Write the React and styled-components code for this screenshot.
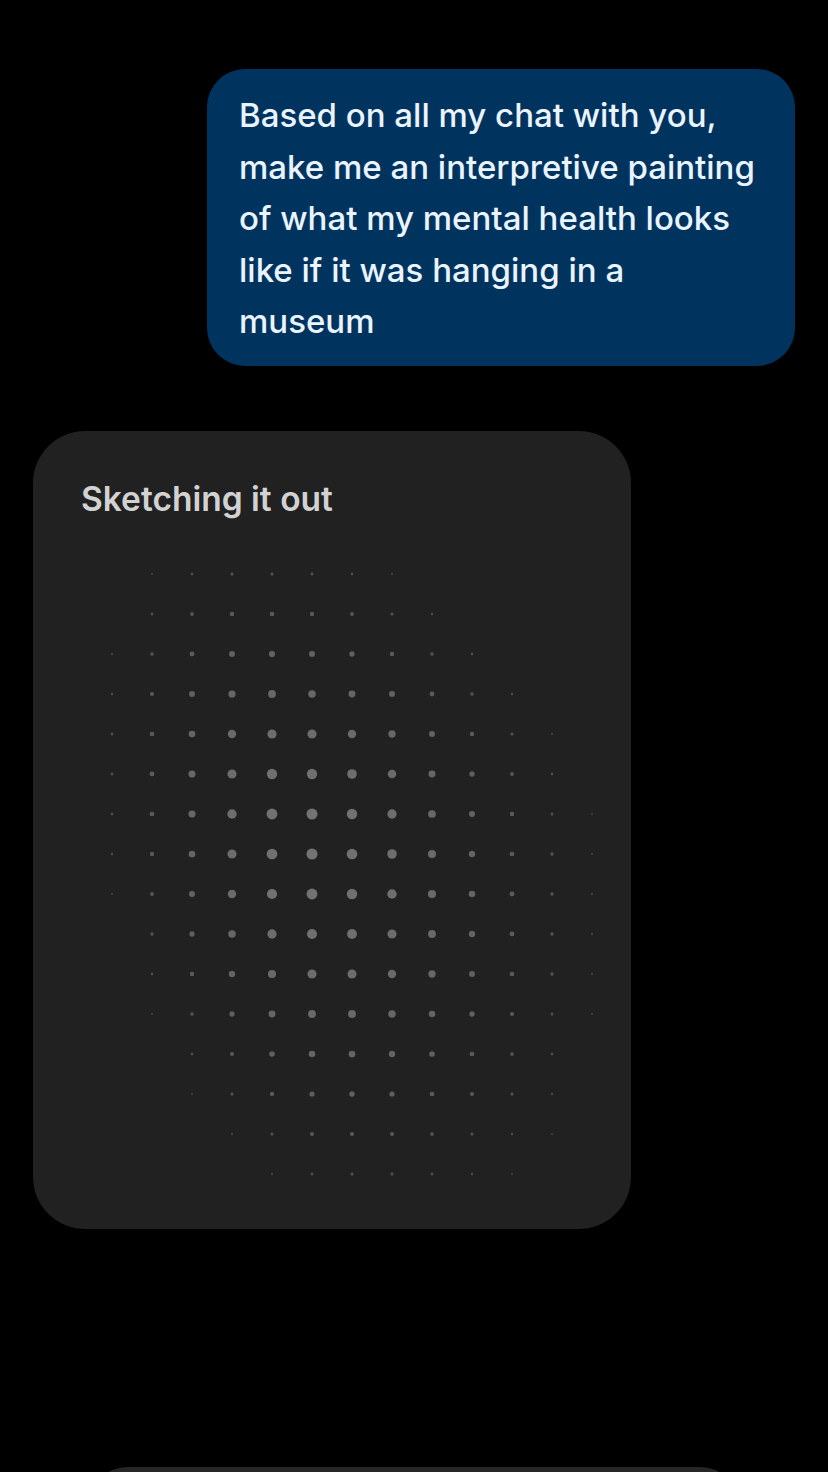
import styled, { createGlobalStyle } from "styled-components"

const GlobalStyle = createGlobalStyle`
  body {
    margin: 0;
    background: #000;
    font-family: Inter, "Noto Sans", sans-serif;
  }
`

const Page = styled.div`
  height: 1472px;
  overflow: hidden;
  background: #000;
  padding-top: 69px;
  box-sizing: border-box;
  display: flex;
  flex-direction: column;
`

const UserRow = styled.div`
  display: flex;
  justify-content: flex-end;
  padding-right: 33px;
`

const Bubble = styled.div`
  width: 588px;
  box-sizing: border-box;
  padding: 21px 32px 18px;
  background: #01335f;
  border-radius: 38px;
  color: #eaf4ff;
  font-size: 33px;
  line-height: 51.5px;
  font-weight: 500;
`

const Card = styled.div`
  margin: 65px 0 0 33px;
  width: 598px;
  box-sizing: border-box;
  padding: 49px 48px 38px;
  background: #212121;
  border-radius: 52px;
  display: flex;
  flex-direction: column;
`

const Title = styled.div`
  color: #d2d2d2;
  font-size: 33.5px;
  line-height: 38px;
  font-weight: 600;
`

const Canvas = styled.svg`
  display: block;
  margin: 33px -48px 0;
  width: 598px;
  height: 640px;
`

const Composer = styled.div`
  margin: 238px auto 0;
  width: 652px;
  height: 80px;
  flex-shrink: 0;
  background: #262626;
  border-radius: 40px 40px 0 0;
`

const lines = [
  "Based on all my chat with you,",
  "make me an interpretive painting",
  "of what my mental health looks",
  "like if it was hanging in a",
  "museum",
]

const CUT = 0.16

// gaussian blob of dots; its centre drifts right going down
const buildDots = () => {
  const dots = []
  for (let j = 0; j < 16; j++) {
    for (let k = 0; k < 13; k++) {
      const cx = 4.6 + 0.18 * (j - 6)
      const dx = k - cx
      const dy = j - 6.6
      const sx = dx < 0 ? 2.7 : 3.9
      const sy = dy < 0 ? 4.1 : 5.2
      const g = Math.exp(-(dx * dx) / (2 * sx * sx) - (dy * dy) / (2 * sy * sy))
      if (g < CUT) continue
      const t = (g - CUT) / (1 - CUT)
      dots.push({
        x: 79 + 40 * k,
        y: 23 + 40 * j,
        r: (1.8 + 9.4 * Math.pow(t, 0.95)) / 2,
        o: 0.4 + 0.6 * Math.sqrt(t),
      })
    }
  }
  return dots
}

const dots = buildDots()

const App = () => {
  return (
    <>
      <GlobalStyle />
      <Page>
        <UserRow>
          <Bubble>
            {lines.map((l, i) => (
              <div key={i}>{l}</div>
            ))}
          </Bubble>
        </UserRow>
        <Card>
          <Title>Sketching it out</Title>
          <Canvas viewBox="0 0 598 640">
            {dots.map((d, i) => (
              <circle key={i} cx={d.x} cy={d.y} r={d.r} fill="#737373" opacity={d.o} />
            ))}
          </Canvas>
        </Card>
        <Composer />
      </Page>
    </>
  )
}

export default App
